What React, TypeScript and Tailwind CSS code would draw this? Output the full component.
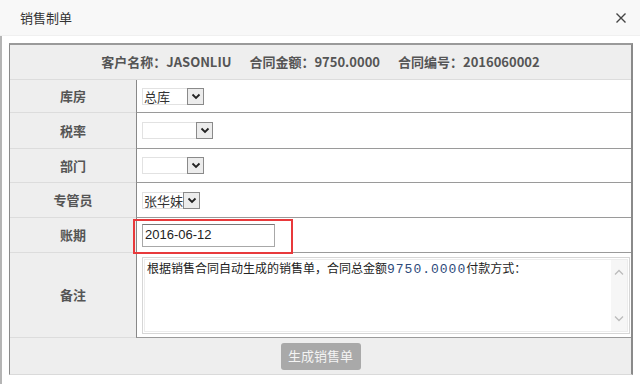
import React from 'react';

const FONT = { fontFamily: '"Noto Sans CJK SC", "Noto Sans", sans-serif' };

const Chevron = () => (
  <svg width="10" height="7" viewBox="0 0 10 7">
    <path d="M1.5 1.5 L5 5 L8.5 1.5" fill="none" stroke="#222" strokeWidth="1.8" />
  </svg>
);

const FakeSelect: React.FC<{ value?: string; width: number }> = ({ value, width }) => (
  <div
    className="h-[17px] flex items-center bg-white border border-[#e2e2e2]"
    style={{ width }}
  >
    <span className="flex-1 text-[13px] leading-[15px] text-[#333] pl-[1px] whitespace-nowrap">{value}</span>
    <span className="w-[17px] h-[17px] shrink-0 -mr-px -my-px flex items-center justify-center border border-[#8a8a8a] bg-[#ececec]">
      <Chevron />
    </span>
  </div>
);

const Row: React.FC<{ label: string; h: string; children?: React.ReactNode }> = ({ label, h, children }) => (
  <div className={`flex ${h}`}>
    <div className="w-[126px] shrink-0 bg-[#eeeeee] border-b border-[#dcdcdc] flex items-center justify-center text-[13px] font-bold text-[#555]">
      {label}
    </div>
    <div className="flex-1 bg-white border-l border-l-[#888] border-b border-b-[#9a9a9a] flex items-center pl-[5px]">
      {children}
    </div>
  </div>
);

export default function App() {
  return (
    <div className="w-[640px] h-[384px] bg-white overflow-hidden flex flex-col" style={FONT}>
      {/* Header */}
      <div className="h-[36px] shrink-0 bg-[#f8f8f8] border-b border-[#f0f0f0] flex items-center justify-between pl-[20px] pr-[13px]">
        <span className="text-[13px] text-[#333]">销售制单</span>
        <svg width="12" height="12" viewBox="0 0 12 12">
          <path d="M1.5 1.5 L10.5 10.5 M10.5 1.5 L1.5 10.5" stroke="#444" strokeWidth="1.4" />
        </svg>
      </div>

      {/* Body */}
      <div className="flex-1 border-l-2 border-[#b5b5b5] pl-[7px] pt-[7px]">
        <div className="w-[624px] border-t-2 border-l border-r-2 border-t-[#9a9a9a] border-l-[#8a8a8a] border-r-[#8a8a8a] border-b border-b-[#dadada]">
          {/* Info row */}
          <div className="h-[35px] bg-[#eeeeee] border-b border-[#dcdcdc] flex items-center justify-center gap-[18px] text-[13px] font-bold text-[#555]">
            <span>客户名称：JASONLIU</span>
            <span>合同金额：9750.0000</span>
            <span>合同编号：2016060002</span>
          </div>

          <Row label="库房" h="h-[33px]">
            <FakeSelect value="总库" width={62} />
          </Row>
          <Row label="税率" h="h-[36px]">
            <FakeSelect width={71} />
          </Row>
          <Row label="部门" h="h-[34px]">
            <FakeSelect width={62} />
          </Row>
          <Row label="专管员" h="h-[35px]">
            <FakeSelect value="张华妹" width={57} />
          </Row>
          <Row label="账期" h="h-[35px]">
            <div className="relative">
              <div className="w-[133px] h-[23px] border border-[#a8a8a8] border-t-[#777] flex items-center pl-[2px] text-[13px] text-[#222]" style={{ fontFamily: '"Liberation Sans", Arial, sans-serif' }}>
                2016-06-12
              </div>
              <div className="absolute left-[-9px] top-[-5px] w-[160px] h-[35px] border-2 border-[#e8393b]" />
            </div>
          </Row>
          <Row label="备注" h="h-[85px]">
            <div className="w-[488px] h-[77px] border border-[#d6d6d6] p-[1px]">
              <div className="w-full h-full border border-[#ececec] flex">
                <div className="flex-1 pl-[2px] text-[12px] text-[#222] leading-[16px] whitespace-nowrap">
                  根据销售合同自动生成的销售单，合同总金额
                  <span className="text-[#2d4a7a] text-[13px] tracking-[1px]" style={{ fontFamily: '"Liberation Mono", monospace' }}>9750.0000</span>
                  付款方式：
                </div>
                <div className="w-[16px] bg-[#f6f6f6] flex flex-col items-center justify-between py-[9px]">
                  <svg width="10" height="6" viewBox="0 0 10 6">
                    <path d="M1 5.5 L5 1.5 L9 5.5" fill="none" stroke="#bcbcbc" strokeWidth="1.3" />
                  </svg>
                  <svg width="10" height="6" viewBox="0 0 10 6">
                    <path d="M1 0.5 L5 4.5 L9 0.5" fill="none" stroke="#bcbcbc" strokeWidth="1.3" />
                  </svg>
                </div>
              </div>
            </div>
          </Row>

          {/* Button row */}
          <div className="h-[36px] bg-[#eeeeee] flex items-center justify-center">
            <button className="w-[80px] h-[27px] rounded-[3px] bg-[#a9a9a9] text-[13px] text-[#f4f4f4]">
              生成销售单
            </button>
          </div>
        </div>
      </div>
    </div>
  );
}
